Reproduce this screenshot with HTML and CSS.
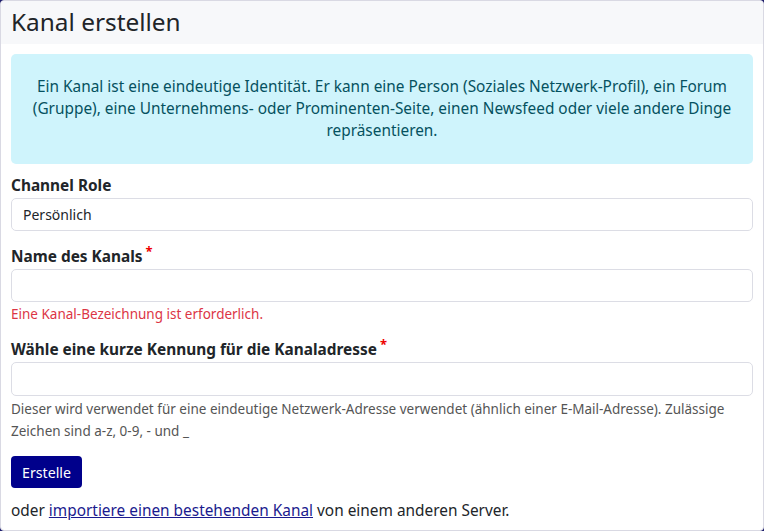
FILE: index.html
```html
<!DOCTYPE html>
<html lang="de">
<head>
<meta charset="utf-8">
<link rel="stylesheet" href="styles.css">
</head>
<body>
<div class="card">
  <div class="card-header"><h2>Kanal erstellen</h2></div>
  <div class="card-body">
    <div class="alert">Ein Kanal ist eine eindeutige Identität. Er kann eine Person (Soziales Netzwerk-Profil), ein Forum (Gruppe), eine Unternehmens- oder Prominenten-Seite, einen Newsfeed oder viele andere Dinge repräsentieren.</div>
    <div class="field">
      <label class="label">Channel Role</label>
      <div class="control select">Persönlich</div>
    </div>
    <div class="field">
      <label class="label">Name des Kanals<sup class="req">*</sup></label>
      <div class="control"></div>
      <div class="error">Eine Kanal-Bezeichnung ist erforderlich.</div>
    </div>
    <div class="field">
      <label class="label">Wähle eine kurze Kennung für die Kanaladresse<sup class="req">*</sup></label>
      <div class="control tall"></div>
      <div class="help">Dieser wird verwendet für eine eindeutige Netzwerk-Adresse verwendet (ähnlich einer E-Mail-Adresse). Zulässige Zeichen sind a-z, 0-9, - und _</div>
    </div>
    <button class="btn">Erstelle</button>
    <p class="import">oder <a href="#">importiere einen bestehenden Kanal</a> von einem anderen Server.</p>
  </div>
</div>
</body>
</html>
```
FILE: styles.css
```css
html, body { margin: 0; padding: 0; }
body {
  background: #1c1c6a;
  font-family: "Noto Sans", sans-serif;
  color: #212529;
}
.card {
  width: 764px;
  height: 531px;
  box-sizing: border-box;
  background: #fff;
  border: 1px solid #d9d9e3;
  border-radius: 4px;
  overflow: hidden;
}
.card-header {
  background: #f7f8fa;
  height: 43px;
  padding: 0 10px;
  display: flex;
  align-items: center;
}
.card-header h2 {
  margin: 0;
  font-size: 24.4px;
  font-weight: 400;
  line-height: 1;
  color: #212529;
}
.card-body { padding: 10px 10px 0; }
.alert {
  background: #cff4fc;
  color: #055160;
  border-radius: 5px;
  text-align: center;
  font-size: 15.4px;
  line-height: 22px;
  padding: 22px 16px;
  margin-bottom: 12px;
}
.field { margin-bottom: 16px; }
.label {
  display: block;
  font-weight: 700;
  font-size: 15.4px;
  line-height: 20px;
  margin-bottom: 2px;
}
.req {
  color: #e00;
  font-size: 13px;
  line-height: 0;
  margin-left: 3px;
  position: relative;
  top: -6px;
  vertical-align: 0;
}
.control {
  height: 33px;
  box-sizing: border-box;
  border: 1px solid #dcdde5;
  border-radius: 5px;
  background: #fff;
}
.control.tall { height: 34px; }
.select {
  font-size: 14px;
  line-height: 31px;
  padding-left: 11px;
}
.error {
  color: #dc3545;
  font-size: 13.5px;
  line-height: 20px;
  margin-top: 2px;
}
.help {
  color: #555;
  font-size: 13.5px;
  line-height: 22px;
  margin-top: 2px;
}
.btn {
  display: block;
  background: #00008b;
  color: #fff;
  border: 0;
  border-radius: 4px;
  font-family: "Noto Sans", sans-serif;
  font-size: 14.2px;
  height: 32px;
  padding: 0 11px;
  margin-top: -2px;
}
.import {
  margin: 12px 0 0;
  font-size: 15.4px;
  line-height: 22px;
}
.import a { color: #1a1a8e; }
```
